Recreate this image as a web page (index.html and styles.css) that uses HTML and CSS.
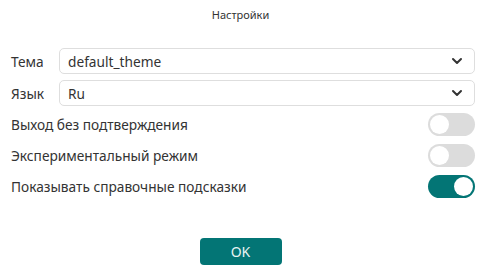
FILE: index.html
```html
<!DOCTYPE html>
<html>
<head>
<meta charset="utf-8">
<link rel="stylesheet" href="styles.css">
</head>
<body>
<div class="dialog">
  <div class="title">Настройки</div>
  <div class="form">
    <div class="field">
      <span class="label">Тема</span>
      <div class="select"><span>default_theme</span>
        <svg class="chev" width="12" height="8" viewBox="0 0 12 8"><path d="M2 2 L6 6 L10 2" fill="none" stroke="#333" stroke-width="2" stroke-linecap="round" stroke-linejoin="round"/></svg>
      </div>
    </div>
    <div class="field">
      <span class="label">Язык</span>
      <div class="select"><span>Ru</span>
        <svg class="chev" width="12" height="8" viewBox="0 0 12 8"><path d="M2 2 L6 6 L10 2" fill="none" stroke="#333" stroke-width="2" stroke-linecap="round" stroke-linejoin="round"/></svg>
      </div>
    </div>
    <div class="toggle-row">
      <span>Выход без подтверждения</span>
      <span class="toggle"><span class="knob"></span></span>
    </div>
    <div class="toggle-row">
      <span>Экспериментальный режим</span>
      <span class="toggle"><span class="knob"></span></span>
    </div>
    <div class="toggle-row">
      <span>Показывать справочные подсказки</span>
      <span class="toggle on"><span class="knob"></span></span>
    </div>
  </div>
  <div class="actions">
    <button class="ok">OK</button>
  </div>
</div>
</body>
</html>
```
FILE: styles.css
```css
html, body {
  margin: 0;
  padding: 0;
  background: #fff;
}
body {
  font-family: "Noto Sans", "Open Sans", sans-serif;
  color: #333;
  width: 481px;
  height: 279px;
}
.dialog {
  padding: 7px 6px 0 11px;
  display: flex;
  flex-direction: column;
}
.title {
  text-align: center;
  font-size: 11px;
  line-height: 16px;
  color: #333;
  margin-left: -5px;
}
.form {
  margin-top: 25px;
  display: flex;
  flex-direction: column;
}
.field {
  display: flex;
  align-items: center;
  height: 26px;
  margin-bottom: 6px;
}
.label {
  width: 48px;
  font-size: 13.7px;
}
.select {
  flex: 1;
  height: 24px;
  border: 1px solid #dedede;
  border-radius: 5px;
  display: flex;
  align-items: center;
  justify-content: space-between;
  padding: 0 11px 0 8px;
  font-size: 13.7px;
}
.chev {
  display: block;
}
.toggle-row {
  display: flex;
  align-items: center;
  justify-content: space-between;
  height: 23px;
  margin-bottom: 8px;
  font-size: 13.7px;
}
.form .field + .toggle-row {
  margin-top: 1px;
}
.toggle {
  width: 47px;
  height: 23px;
  border-radius: 12px;
  background: #dcdcdc;
  box-sizing: border-box;
  padding: 2px;
  display: flex;
  align-items: center;
}
.knob {
  width: 19px;
  height: 19px;
  border-radius: 50%;
  background: #fff;
}
.toggle.on {
  background: #037575;
  justify-content: flex-end;
}
.actions {
  display: flex;
  justify-content: center;
  margin-top: 32px;
  margin-left: -5px;
}
.ok {
  width: 82px;
  height: 27px;
  border: none;
  border-radius: 4px;
  background: #037575;
  color: #e8f3f3;
  font-family: "Noto Sans", sans-serif;
  font-size: 14px;
  padding: 0;
}
```
